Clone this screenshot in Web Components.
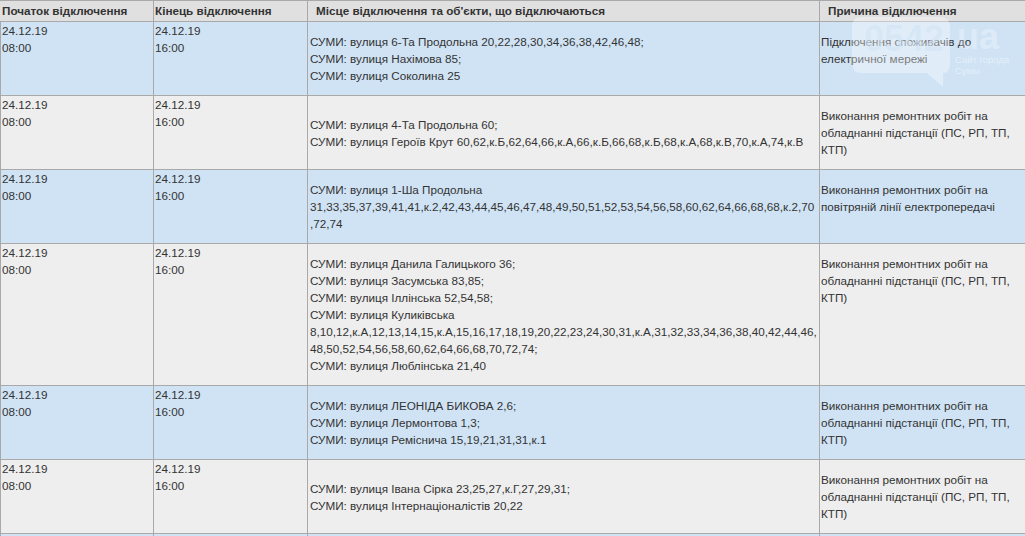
<!DOCTYPE html>
<html lang="uk">
<head>
<meta charset="utf-8">
<title>Відключення</title>
<style>
  html, body { margin: 0; padding: 0; background: #fff; overflow: hidden; }
  body { font: 11.7px/17px "Liberation Sans", Arial, sans-serif; color: #333; height: 536px; }
</style>
</head>
<body>
<outage-table>
  <outage-row start-date="24.12.19" start-time="08:00" end-date="24.12.19" end-time="16:00" tone="blue">
    <div>СУМИ: вулиця 6-Та Продольна 20,22,28,30,34,36,38,42,46,48;</div>
    <div>СУМИ: вулиця Нахімова 85;</div>
    <div>СУМИ: вулиця Соколина 25</div>
    <span slot="reason">Підключення споживачів до електричної мережі</span>
  </outage-row>
  <outage-row start-date="24.12.19" start-time="08:00" end-date="24.12.19" end-time="16:00">
    <div>СУМИ: вулиця 4-Та Продольна 60;</div>
    <div>СУМИ: вулиця Героїв Крут 60,62,к.Б,62,64,66,к.А,66,к.Б,66,68,к.Б,68,к.А,68,к.В,70,к.А,74,к.В</div>
    <span slot="reason">Виконання ремонтних робіт на обладнанні підстанції (ПС, РП, ТП, КТП)</span>
  </outage-row>
  <outage-row start-date="24.12.19" start-time="08:00" end-date="24.12.19" end-time="16:00" tone="blue">
    <div>СУМИ: вулиця 1-Ша Продольна</div>
    <div>31,33,35,37,39,41,41,к.2,42,43,44,45,46,47,48,49,50,51,52,53,54,56,58,60,62,64,66,68,68,к.2,70<br>,72,74</div>
    <span slot="reason">Виконання ремонтних робіт на повітряній лінії електропередачі</span>
  </outage-row>
  <outage-row tall start-date="24.12.19" start-time="08:00" end-date="24.12.19" end-time="16:00">
    <div>СУМИ: вулиця Данила Галицького 36;</div>
    <div>СУМИ: вулиця Засумська 83,85;</div>
    <div>СУМИ: вулиця Іллінська 52,54,58;</div>
    <div>СУМИ: вулиця Куликівська</div>
    <div>8,10,12,к.А,12,13,14,15,к.А,15,16,17,18,19,20,22,23,24,30,31,к.А,31,32,33,34,36,38,40,42,44,46,<br>48,50,52,54,56,58,60,62,64,66,68,70,72,74;</div>
    <div>СУМИ: вулиця Люблінська 21,40</div>
    <span slot="reason">Виконання ремонтних робіт на обладнанні підстанції (ПС, РП, ТП, КТП)</span>
  </outage-row>
  <outage-row start-date="24.12.19" start-time="08:00" end-date="24.12.19" end-time="16:00" tone="blue">
    <div>СУМИ: вулиця ЛЕОНІДА БИКОВА 2,6;</div>
    <div>СУМИ: вулиця Лермонтова 1,3;</div>
    <div>СУМИ: вулиця Реміснича 15,19,21,31,31,к.1</div>
    <span slot="reason">Виконання ремонтних робіт на обладнанні підстанції (ПС, РП, ТП, КТП)</span>
  </outage-row>
  <outage-row start-date="24.12.19" start-time="08:00" end-date="24.12.19" end-time="16:00">
    <div>СУМИ: вулиця Івана Сірка 23,25,27,к.Г,27,29,31;</div>
    <div>СУМИ: вулиця Інтернаціоналістів 20,22</div>
    <span slot="reason">Виконання ремонтних робіт на обладнанні підстанції (ПС, РП, ТП, КТП)</span>
  </outage-row>
  <outage-row tone="blue"></outage-row>
</outage-table>
<site-watermark></site-watermark>

<script>
const COLUMNS = '153px 154px 512px 1fr';

class OutageTable extends HTMLElement {
  constructor() {
    super();
    this.attachShadow({ mode: 'open' }).innerHTML = `
      <style>
        :host { display: block; border-top: 1px solid #a9a9a9; }
        .head {
          display: grid;
          grid-template-columns: ${COLUMNS};
          height: 20px;
          background: #e0e0e0;
          border-bottom: 1px solid #a9a9a9;
          font-weight: bold;
          line-height: 19px;
          color: #333;
        }
        .head div { border-left: 1px solid #a9a9a9; padding-left: 1px; white-space: nowrap; }
        .head div:first-child { border-left: 0; padding-left: 2px; }
        .head .place { padding-left: 8px; }
        .head .reason { padding-left: 8px; }
      </style>
      <div class="head">
        <div>Початок відключення</div>
        <div>Кінець відключення</div>
        <div class="place">Місце відключення та об'єкти, що відключаються</div>
        <div class="reason">Причина відключення</div>
      </div>
      <slot></slot>`;
  }
}

class OutageRow extends HTMLElement {
  constructor() {
    super();
    const get = (name) => this.getAttribute(name) || '';
    this.attachShadow({ mode: 'open' }).innerHTML = `
      <style>
        :host {
          display: grid;
          grid-template-columns: ${COLUMNS};
          min-height: 73px;
          background: #eeeeee;
          border-bottom: 1px solid #a9a9a9;
        }
        :host([tone="blue"]) { background: #d0e3f5; }
        :host([tall]) { min-height: 141px; }
        .cell { border-left: 1px solid #a9a9a9; padding: 0 1px; }
        .cell:first-child { border-left: 0; padding-left: 0; }
        .place {
          display: flex;
          flex-direction: column;
          justify-content: center;
          padding: 0 2px;
          white-space: nowrap;
        }
        .reason { padding: 11px 1px 0; }
      </style>
      <div class="cell">${get('start-date')}<br>${get('start-time')}</div>
      <div class="cell">${get('end-date')}<br>${get('end-time')}</div>
      <div class="cell place"><slot></slot></div>
      <div class="cell reason"><slot name="reason"></slot></div>`;
  }
}

class SiteWatermark extends HTMLElement {
  constructor() {
    super();
    this.attachShadow({ mode: 'open' }).innerHTML = `
      <style>
        :host { position: absolute; left: 851px; top: 16px; width: 170px; height: 74px; pointer-events: none; }
        svg { position: absolute; left: 0; top: 0; }
        .num, .ua { position: absolute; font-weight: bold; font-size: 36px; line-height: 36px; }
        .num { left: 13px; top: 5px; color: rgba(208,227,245,.55); }
        .ua { left: 106px; top: 3px; color: rgba(255,255,255,.3); }
        .sub { position: absolute; left: 104px; top: 38px; font-size: 9.5px; line-height: 11px; color: rgba(255,255,255,.45); white-space: nowrap; }
      </style>
      <svg width="102" height="74" viewBox="0 0 102 74">
        <path d="M10 1H89Q99 1 99 11V47Q99 57 92 57V71L76 57H10Q1 57 1 47V11Q1 1 10 1Z" fill="rgba(255,255,255,.35)"/>
      </svg>
      <div class="num">0542</div>
      <div class="ua">ua</div>
      <div class="sub">Сайт города<br>Сумы</div>`;
  }
}

customElements.define('outage-table', OutageTable);
customElements.define('outage-row', OutageRow);
customElements.define('site-watermark', SiteWatermark);
</script>
</body>
</html>
